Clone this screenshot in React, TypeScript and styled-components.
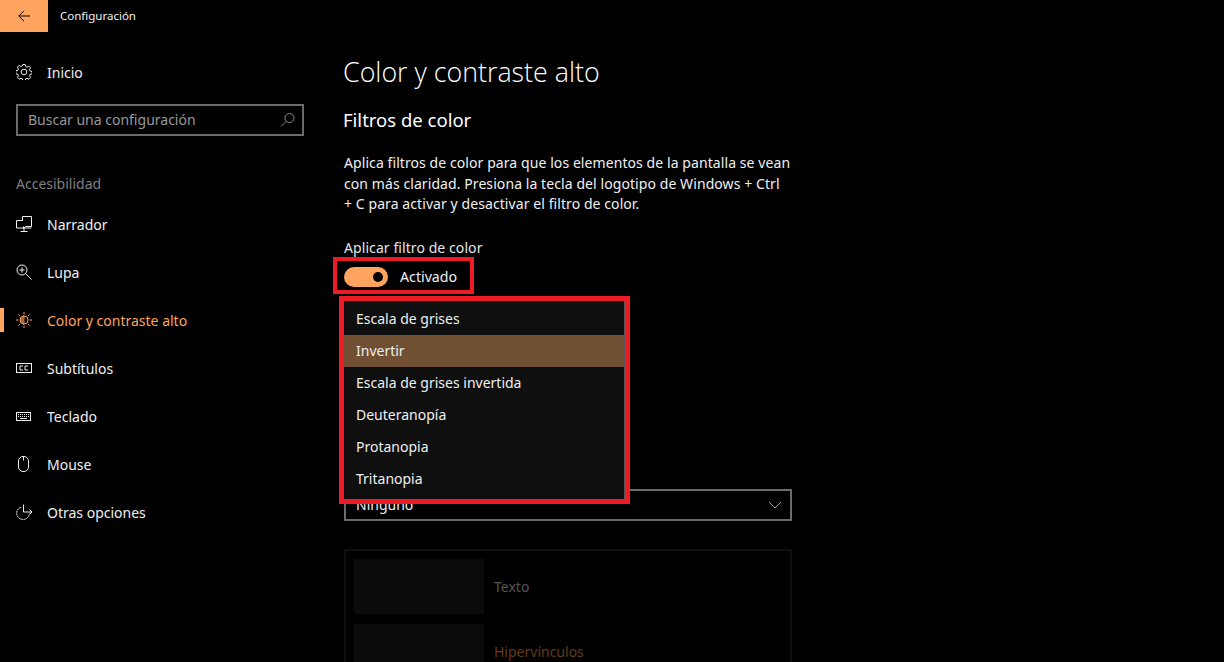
import * as React from 'react';
import styled, { createGlobalStyle } from 'styled-components';

const GlobalStyle = createGlobalStyle`
  html, body {
    margin: 0;
    padding: 0;
    background: #000;
  }
  body {
    font-family: "Noto Sans", "Open Sans", sans-serif;
    color: #fff;
  }
  * { box-sizing: border-box; }
`;

const ACCENT = '#ffa45f';

const Page = styled.div`
  position: relative;
  width: 1224px;
  height: 662px;
  overflow: hidden;
  background: #000;
`;

const TitleBar = styled.div`
  display: flex;
  align-items: center;
  height: 32px;
`;

const BackButton = styled.div`
  display: flex;
  align-items: center;
  justify-content: center;
  width: 48px;
  height: 32px;
  background: ${ACCENT};
`;

const WindowTitle = styled.div`
  margin: -2px 0 0 12px;
  font-size: 11.5px;
  color: #f2f2f2;
`;

const Body = styled.div`
  display: flex;
`;

const Sidebar = styled.nav`
  flex: 0 0 344px;
  padding-top: 16px;
`;

const NavRow = styled.div<{ $active?: boolean }>`
  position: relative;
  display: flex;
  align-items: center;
  height: 48px;
  padding-left: 16px;
  font-size: 14px;
  color: ${(p) => (p.$active ? ACCENT : '#f0f0f0')};
  &::before {
    content: '';
    display: ${(p) => (p.$active ? 'block' : 'none')};
    position: absolute;
    left: 0;
    top: 12px;
    width: 4px;
    height: 24px;
    background: ${ACCENT};
  }
`;

const NavIcon = styled.span`
  display: flex;
  align-items: center;
  width: 31px;
  height: 16px;
`;

const Search = styled.div`
  display: flex;
  align-items: center;
  justify-content: space-between;
  width: 288px;
  height: 32px;
  margin: 8px 0 0 16px;
  padding: 0 6px 2px 10px;
  border: 2px solid #6b6b6b;
  font-size: 14px;
  color: #999;
`;

const SearchIcon = styled.svg`
  margin-top: 2px;
`;

const GroupLabel = styled.div`
  height: 20px;
  margin: 38px 0 6px 16px;
  font-size: 14px;
  line-height: 20px;
  color: #7f7f7f;
`;

const Main = styled.main`
  flex: 0 0 448px;
`;

const PageTitle = styled.h1`
  margin: 20px 0 0 -1px;
  font-family: "Open Sans", sans-serif;
  font-size: 26.8px;
  font-weight: 300;
  line-height: 40px;
  white-space: nowrap;
`;

const SectionTitle = styled.h2`
  margin: 14px 0 0 -1px;
  font-size: 18.5px;
  font-weight: 400;
  line-height: 28px;
  white-space: nowrap;
`;

const Description = styled.p`
  margin: 19px 0 0;
  font-size: 14px;
  line-height: 20.5px;
  letter-spacing: 0.08px;
  color: #f0f0f0;
  white-space: nowrap;
`;

const FieldLabel = styled.div`
  margin-top: 23px;
  font-size: 14px;
  line-height: 20px;
  letter-spacing: 0.08px;
  color: #e6e6e6;
`;

const ToggleRow = styled.div`
  display: flex;
  align-items: center;
  height: 20px;
  margin-top: 9px;
  font-size: 14.2px;
  color: #f0f0f0;
`;

const Toggle = styled.div`
  position: relative;
  width: 44px;
  height: 20px;
  margin-right: 12px;
  border-radius: 10px;
  background: ${ACCENT};
  &::after {
    content: '';
    position: absolute;
    right: 5px;
    top: 5px;
    width: 10px;
    height: 10px;
    border-radius: 50%;
    background: #000;
  }
`;

const Combo = styled.div`
  display: flex;
  align-items: center;
  justify-content: space-between;
  height: 32px;
  margin-top: 202px;
  padding: 0 8px 0 10px;
  border: 2px solid #6b6b6b;
  font-size: 14px;
  color: #f0f0f0;
`;

const PreviewBox = styled.div`
  display: flex;
  flex-direction: column;
  gap: 10px;
  height: 200px;
  margin-top: 28px;
  padding: 8px;
  border: 2px solid #0f0f0f;
`;

const PreviewRow = styled.div`
  display: flex;
  align-items: center;
  gap: 10px;
`;

const Swatch = styled.div`
  flex: 0 0 130px;
  height: 55px;
  background: #0b0b0b;
`;

const PreviewText = styled.span<{ $link?: boolean }>`
  font-size: 14px;
  color: ${(p) => (p.$link ? '#633c19' : '#555')};
`;

const Popup = styled.div`
  position: absolute;
  left: 344px;
  top: 297px;
  width: 281px;
  height: 203px;
  padding-top: 5px;
  background: #0f0f0f;
  border-right: 1px solid #555;
  border-top: 1px solid #555;
`;

const PopupItem = styled.div<{ $selected?: boolean }>`
  display: flex;
  align-items: center;
  height: 32px;
  padding: 0 0 1px 12px;
  font-size: 14px;
  color: #f0f0f0;
  background: ${(p) => (p.$selected ? '#704f32' : 'transparent')};
`;

const Highlight = styled.div<{ $wide?: boolean }>`
  position: absolute;
  left: ${(p) => (p.$wide ? '339px' : '333px')};
  top: ${(p) => (p.$wide ? '296px' : '257px')};
  width: ${(p) => (p.$wide ? '291px' : '141px')};
  height: ${(p) => (p.$wide ? '208px' : '37px')};
  border: ${(p) => (p.$wide ? '5px' : '4px')} solid #ed1c24;
`;

const Stroke = ({ children, w = 16, h = 16, color = '#f0f0f0' }: { children: React.ReactNode; w?: number; h?: number; color?: string }) => (
  <svg width={w} height={h} viewBox={`0 0 ${w} ${h}`} fill="none" stroke={color} strokeWidth="1">
    {children}
  </svg>
);

const GearIcon = () => (
  <Stroke>
    <circle cx="8" cy="8" r="2.8" />
    <path d="M6.8.5h2.4l.4 2 1.5.7 1.8-1.1 1.7 1.7-1.1 1.8.7 1.5 2 .4v2.4l-2 .4-.7 1.5 1.1 1.8-1.7 1.7-1.8-1.1-1.5.7-.4 2H6.8l-.4-2-1.5-.7-1.8 1.1-1.7-1.7 1.1-1.8-.7-1.5-2-.4V6.8l2-.4.7-1.5-1.1-1.8 1.7-1.7 1.8 1.1 1.5-.7z" />
  </Stroke>
);

const NarratorIcon = () => (
  <Stroke>
    <path d="M6.5 5V.5h9v10H9.5l-2 2v-2" />
    <path d="M6.5 4.5H.5v7.5h15" />
    <path d="M8 12v3M4.5 15.5h7" />
  </Stroke>
);

const LupaIcon = () => (
  <Stroke>
    <circle cx="6" cy="6" r="5" />
    <path d="M9.6 9.6l6 6M3.5 6h5M6 3.5v5" />
  </Stroke>
);

const SunIcon = () => (
  <Stroke color={ACCENT}>
    <circle cx="8" cy="8" r="4" />
    <path d="M8 4h-1v8h1zM6 5v6M5 6v4" strokeWidth=".8" />
    <path d="M8 0v2.5M8 13.5V16M0 8h2.5M13.5 8H16M2.3 2.3l1.8 1.8M11.9 11.9l1.8 1.8M13.7 2.3l-1.8 1.8M4.1 11.9l-1.8 1.8" />
  </Stroke>
);

const CaptionsIcon = () => (
  <Stroke h={12}>
    <rect x=".5" y="1.5" width="15" height="9" />
    <path d="M7 4H4v4h3M12 4H9v4h3" />
  </Stroke>
);

const KeyboardIcon = () => (
  <Stroke h={12}>
    <rect x=".5" y="2.5" width="14" height="8" />
    <path d="M2 4.5h11M2 6.5h11" strokeDasharray="1 1" />
    <path d="M4 8.5h7" />
  </Stroke>
);

const MouseIcon = () => (
  <Stroke>
    <rect x="2.5" y=".5" width="10" height="15" rx="4.5" />
    <path d="M7.5.5v4" />
  </Stroke>
);

const OtherIcon = () => (
  <Stroke>
    <path d="M5 3.2a6.3 6.3 0 1 0 8.3 6.3" strokeDasharray="2 .6" />
    <path d="M7.5 2v7.5H16M13.5 7l2.5 2.5L13.5 12" transform="translate(0 -1.5)" />
  </Stroke>
);

const navItems = [
  { label: 'Narrador', icon: <NarratorIcon /> },
  { label: 'Lupa', icon: <LupaIcon /> },
  { label: 'Color y contraste alto', icon: <SunIcon />, active: true },
  { label: 'Subtítulos', icon: <CaptionsIcon /> },
  { label: 'Teclado', icon: <KeyboardIcon /> },
  { label: 'Mouse', icon: <MouseIcon /> },
  { label: 'Otras opciones', icon: <OtherIcon /> },
];

const filters = ['Escala de grises', 'Invertir', 'Escala de grises invertida', 'Deuteranopía', 'Protanopia', 'Tritanopia'];

const App = () => {
  return (
    <Page>
      <GlobalStyle />
      <TitleBar>
        <BackButton>
          <svg width="12" height="12" viewBox="0 0 12 12" fill="none" stroke="#000" strokeWidth="1">
            <path d="M12 6H.8M6 .8L.8 6 6 11.2" />
          </svg>
        </BackButton>
        <WindowTitle>Configuración</WindowTitle>
      </TitleBar>
      <Body>
        <Sidebar>
          <NavRow>
            <NavIcon><GearIcon /></NavIcon>
            Inicio
          </NavRow>
          <Search>
            Buscar una configuración
            <SearchIcon width="16" height="16" viewBox="0 0 16 16" fill="none" stroke="#8a8a8a" strokeWidth="1">
              <circle cx="9.5" cy="6" r="4.5" />
              <path d="M6.3 9.2L1 14.5" />
            </SearchIcon>
          </Search>
          <GroupLabel>Accesibilidad</GroupLabel>
          {navItems.map((item) => (
            <NavRow key={item.label} $active={item.active}>
              <NavIcon>{item.icon}</NavIcon>
              {item.label}
            </NavRow>
          ))}
        </Sidebar>
        <Main>
          <PageTitle>Color y contraste alto</PageTitle>
          <SectionTitle>Filtros de color</SectionTitle>
          <Description>
            Aplica filtros de color para que los elementos de la pantalla se vean<br />
            con más claridad. Presiona la tecla del logotipo de Windows + Ctrl<br />
            + C para activar y desactivar el filtro de color.
          </Description>
          <FieldLabel>Aplicar filtro de color</FieldLabel>
          <ToggleRow>
            <Toggle />
            Activado
          </ToggleRow>
          <Combo>
            Ninguno
            <svg width="14" height="8" viewBox="0 0 14 8" fill="none" stroke="#a0a0a0" strokeWidth="1">
              <path d="M1 1l6 6 6-6" />
            </svg>
          </Combo>
          <PreviewBox>
            <PreviewRow>
              <Swatch />
              <PreviewText>Texto</PreviewText>
            </PreviewRow>
            <PreviewRow>
              <Swatch />
              <PreviewText $link>Hipervínculos</PreviewText>
            </PreviewRow>
          </PreviewBox>
        </Main>
      </Body>
      <Popup>
        {filters.map((name) => (
          <PopupItem key={name} $selected={name === 'Invertir'}>{name}</PopupItem>
        ))}
      </Popup>
      <Highlight />
      <Highlight $wide />
    </Page>
  );
};

export default App;
